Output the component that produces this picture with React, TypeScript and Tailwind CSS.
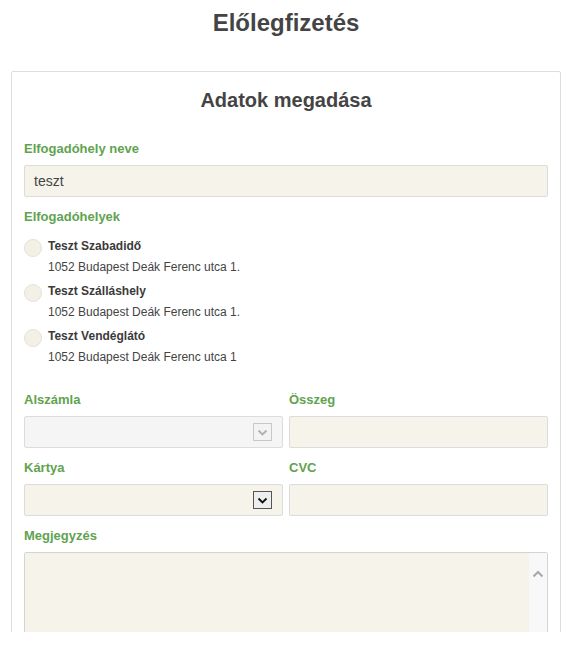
import type { ReactNode } from 'react'

const places = [
	{ name: 'Teszt Szabadidő', address: '1052 Budapest Deák Ferenc utca 1.' },
	{ name: 'Teszt Szálláshely', address: '1052 Budapest Deák Ferenc utca 1.' },
	{ name: 'Teszt Vendéglátó', address: '1052 Budapest Deák Ferenc utca 1' },
]

function Label({ children, className = '' }: { children: ReactNode; className?: string }) {
	return (
		<div className={`text-[13px] font-bold leading-4 text-[#5fa34f] ${className}`}>
			{children}
		</div>
	)
}

function Select({ disabled = false }: { disabled?: boolean }) {
	return (
		<div
			className={`flex h-8 items-center justify-end rounded-[2px] border pr-[10px] ${
				disabled ? 'border-[#dcdcdc] bg-[#f5f5f5]' : 'border-[#dcdcdc] bg-[#f6f4ea]'
			}`}
		>
			<div
				className={`flex h-[18px] w-[19px] items-center justify-center border ${
					disabled ? 'border-[#c8c8c8] bg-[#f3f3f3]' : 'border-[#555] bg-[#eeeeee]'
				}`}
			>
				<svg width="11" height="7" viewBox="0 0 11 7">
					<path
						d="M1.5 1.5 L5.5 5.5 L9.5 1.5"
						fill="none"
						stroke={disabled ? '#b0b0b0' : '#111'}
						strokeWidth="1.8"
					/>
				</svg>
			</div>
		</div>
	)
}

function Field() {
	return <div className="h-8 rounded-[2px] border border-[#dcdcdc] bg-[#f6f4ea]" />
}

export default function App() {
	return (
		<div className="h-[632px] overflow-hidden bg-white font-['Liberation_Sans',Arial,sans-serif] text-[#444]">
			<h1 className="pt-[9px] text-center text-[24px] font-bold leading-7">Előlegfizetés</h1>

			<div className="mx-[11px] mt-[34px] rounded-[2px] border border-[#dddddd] px-3 pt-4 pb-6">
				<h2 className="mb-[29px] text-center text-[20px] font-bold leading-6">
					Adatok megadása
				</h2>

				<Label className="mb-2">Elfogadóhely neve</Label>
				<div className="mb-3 flex h-8 items-center rounded-[2px] border border-[#dcdcdc] bg-[#f6f4ea] px-[9px] text-[14px]">
					teszt
				</div>

				<Label className="mb-[13px]">Elfogadóhelyek</Label>
				<div className="mb-[27px] flex flex-col gap-2">
					{places.map((p) => (
						<div key={p.name} className="flex">
							<div className="mt-px mr-[6px] h-[18px] w-[18px] shrink-0 rounded-full border border-[#e4e2d8] bg-[#f3f1e6]" />
							<div>
								<div className="text-[12px] font-bold leading-4 text-[#3a3a3a]">{p.name}</div>
								<div className="mt-[5px] text-[12px] leading-4">{p.address}</div>
							</div>
						</div>
					))}
				</div>

				<div className="grid grid-cols-2 gap-x-[6px]">
					<div>
						<Label className="mb-2">Alszámla</Label>
						<div className="mb-3">
							<Select disabled />
						</div>
					</div>
					<div>
						<Label className="mb-2">Összeg</Label>
						<div className="mb-3">
							<Field />
						</div>
					</div>
					<div>
						<Label className="mb-2">Kártya</Label>
						<div className="mb-3">
							<Select />
						</div>
					</div>
					<div>
						<Label className="mb-2">CVC</Label>
						<div className="mb-3">
							<Field />
						</div>
					</div>
				</div>

				<Label className="mb-2">Megjegyzés</Label>
				<div className="flex h-[120px] rounded-[2px] border border-[#d4d4d4]">
					<div className="flex-1 bg-[#f6f4ea]" />
					<div className="flex w-[18px] justify-center bg-[#f8f8f8] pt-[17px]">
						<svg width="12" height="8" viewBox="0 0 12 8">
							<path d="M1.5 6.5 L6 2 L10.5 6.5" fill="none" stroke="#a8a8a8" strokeWidth="2" />
						</svg>
					</div>
				</div>
			</div>
		</div>
	)
}
